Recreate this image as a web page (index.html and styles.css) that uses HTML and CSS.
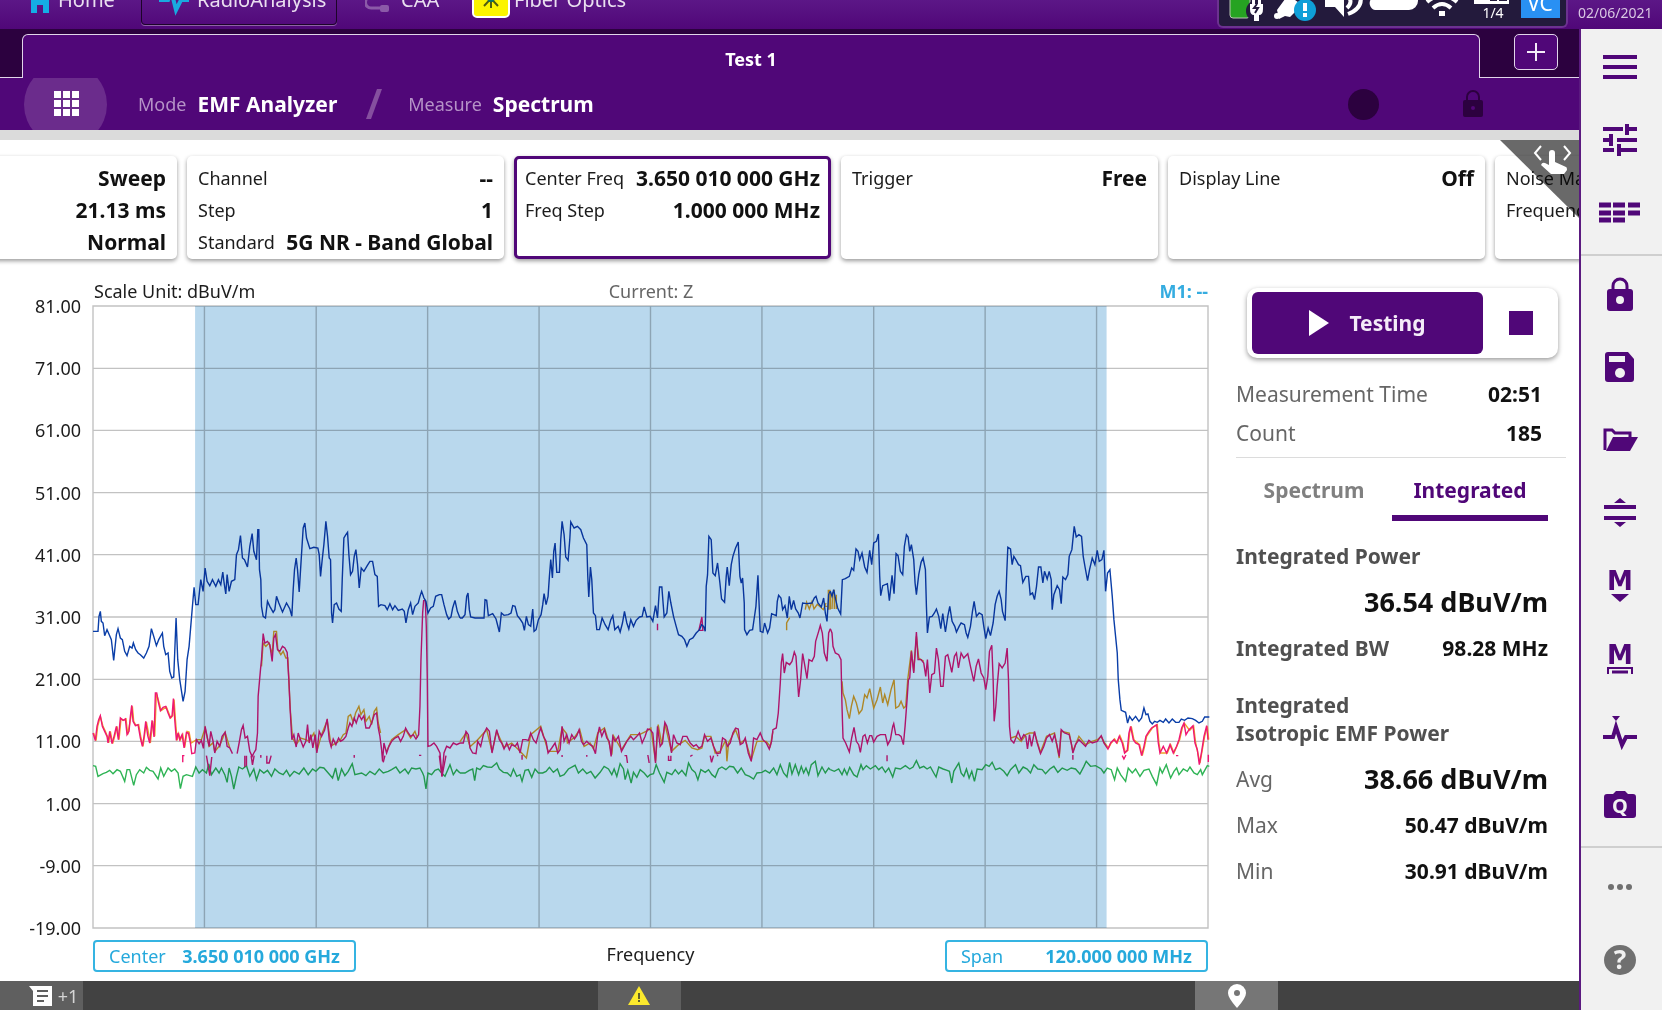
FILE: index.html
```html
<!DOCTYPE html>
<html lang="en">
<head>
  <meta charset="UTF-8" />
  <meta name="viewport" content="width=device-width, initial-scale=1.0"/>
  <title>EMF Analyzer</title>
  <link rel="stylesheet" href="styles.css">
</head>
<body>

  <!-- Top bar -->
  <header class="topbar">
    <nav class="apps">
      <a href="#" class="app app-home">
        <svg width="20" height="28" viewBox="0 0 20 28"><path d="M10 4 0 14h1v14h6v-8h6v8h6V14h1z" fill="#14aee5"/></svg>
        Home
      </a>
      <a href="#" class="app active">
        <svg width="30" height="34" viewBox="0 0 30 34"><path d="M0 18h9l3-10 5 20 5-10h8" fill="none" stroke="#19a9e0" stroke-width="4"/></svg>
        RadioAnalysis
      </a>
      <a href="#" class="app app-caa">
        <svg width="25" height="28" viewBox="0 0 25 28"><path d="M20 12H6a5 5 0 0 0 0 11h12" fill="none" stroke="#8b5aa8" stroke-width="3"/><rect x="15" y="20" width="9" height="7" rx="2" fill="#8b5aa8"/></svg>
        CAA
      </a>
      <a href="#" class="app app-fiber">
        <svg width="38" height="38" viewBox="0 0 38 38"><rect x="1" y="1" width="36" height="36" rx="4" fill="#fcf400" stroke="#fff" stroke-width="2"/><g stroke="#4f5d12" stroke-width="2"><path d="M19 8v20M9 18h20M12 11l14 15M26 11 12 26"/></g><circle cx="19" cy="18" r="4" fill="#08756c"/></svg>
        Fiber Optics
      </a>
    </nav>
    <div class="status">
      <svg width="347" height="26" viewBox="0 0 347 26">
        <!-- battery -->
        <rect x="11" y="-10" width="20" height="28" rx="3" fill="#26a322" stroke="#b9c4b2"/>
        <circle cx="38" cy="11" r="11" fill="#231a3c"/>
        <path d="M31 4h13v5q0 6-4 6h-5q-4 0-4-6zM33 0h3v5h-3zM39 0h3v5h-3zM35 14h5v7h-5z" fill="#fff"/>
        <path d="m38 4-3 4h4l-3 5" fill="none" stroke="#231a3c" stroke-width="2"/>
        <!-- satellite -->
        <path d="m58 10 11-15 14 10-12 12-5-1-6 3z" fill="#fff"/>
        <circle cx="58" cy="16" r="3" fill="#fff"/>
        <circle cx="86" cy="10" r="11" fill="#0f9fd8"/>
        <path d="M86 3v8M86 13v4" stroke="#fff" stroke-width="4"/>
        <!-- speaker -->
        <path d="M106-6h10l9-6v29l-9-10h-10z" fill="#fff"/>
        <path d="M128-4q7 5 0 12M129 14q16-6 12-20" fill="none" stroke="#fff" stroke-width="4"/>
        <!-- cloud -->
        <path d="M158-8h32a9 9 0 0 1 0 18h-34a7 7 0 0 1-3-12z" fill="#fff"/>
        <!-- wifi -->
        <path d="M208 2q15-13 30 0M214 8q9-8 18 0" fill="none" stroke="#fff" stroke-width="4"/>
        <rect x="220" y="11" width="6" height="5" fill="#fff"/>
        <!-- sim slots -->
        <path d="M255-6h35V4h-35z" fill="#fff"/>
        <path d="M271-6h7v7h-7zM280-6h8v7h-8z" fill="#231a3c"/>
        <text x="274" y="18" class="slot-text">1/4</text>
        <rect x="302" y="-20" width="39" height="38" fill="#2990f3"/>
        <text x="321" y="11" class="vnc-text">VC</text>
      </svg>
    </div>
    <time class="date">02/06/2021</time>
  </header>

  <div class="layout">
    <main class="main">

      <!-- Test tabs -->
      <div class="tabs">
        <div class="tabs-left"></div>
        <button class="tab" type="button">Test 1</button>
        <div class="tabs-right">
          <button class="add" type="button" aria-label="Add test">
            <svg width="20" height="20" viewBox="0 0 20 20"><path d="M10 1v18M1 10h18" stroke="#f4ebf8" stroke-width="2"/></svg>
          </button>
        </div>
      </div>

      <!-- Mode and measure -->
      <div class="modebar">
        <button class="launcher" type="button" aria-label="Modes">
          <svg width="26" height="26" viewBox="0 0 26 26" fill="#fff"><path d="M1 0h7v7H1zM10 0h7v7h-7zM19 0h7v7h-7zM1 9h7v7H1zM10 9h7v7h-7zM19 9h7v7h-7zM1 18h7v7H1zM10 18h7v7h-7zM19 18h7v7h-7z"/></svg>
        </button>
        <span class="mode-label">Mode</span>
        <span class="mode-value">EMF Analyzer</span>
        <svg class="slash" width="18" height="32" viewBox="0 0 18 32"><path d="M1 31 12 1h5L6 31z" fill="#854f9f"/></svg>
        <span class="mode-label">Measure</span>
        <span class="mode-value">Spectrum</span>
        <span class="record"></span>
        <svg class="mode-lock" width="22" height="28" viewBox="0 0 22 28"><path d="M5 11V7a6 6 0 0 1 12 0v4" fill="none" stroke="#2c013f" stroke-width="2"/><rect x="1" y="10" width="20" height="17" rx="2" fill="#2c013f"/><circle cx="11" cy="18" r="2" fill="#520778"/></svg>
      </div>

      <!-- Parameter cards -->
      <div class="cards">
        <div class="card">
          <div class="param"><span></span><b>Sweep</b></div>
          <div class="param"><span></span><b>21.13 ms</b></div>
          <div class="param"><span></span><b>Normal</b></div>
        </div>
        <div class="card">
          <div class="param"><span>Channel</span><b>--</b></div>
          <div class="param"><span>Step</span><b>1</b></div>
          <div class="param"><span>Standard</span><b>5G NR - Band Global</b></div>
        </div>
        <div class="card selected">
          <div class="param"><span>Center Freq</span><b>3.650 010 000 GHz</b></div>
          <div class="param"><span>Freq Step</span><b>1.000 000 MHz</b></div>
        </div>
        <div class="card">
          <div class="param"><span>Trigger</span><b>Free</b></div>
        </div>
        <div class="card">
          <div class="param"><span>Display Line</span><b>Off</b></div>
        </div>
        <div class="card">
          <div class="param"><span>Noise Marker</span><b>Off</b></div>
          <div class="param"><span>Frequency Count</span><b>Off</b></div>
        </div>
        <div class="corner"></div>
        <svg class="swipe" width="44" height="40" viewBox="0 0 44 40"><path d="m10 5-6 7 6 7M33 5l6 7-6 7" fill="none" stroke="#fff" stroke-width="2"/><path d="M18 12a3 3 0 0 1 6 0v9l11 5q1 0 1 3l-3 4H20l-10-9q1-3 4-2l4 2z" fill="#fff"/></svg>
      </div>

      <div class="workspace">

        <!-- Spectrum chart -->
        <section class="chart">
          <div class="chart-head">
            <span>Scale Unit: dBuV/m</span>
            <span class="current">Current: Z</span>
            <b class="marker">M1: --</b>
          </div>
          <div class="chart-body">
            <div class="axis">
              <span>81.00</span><span>71.00</span><span>61.00</span><span>51.00</span><span>41.00</span><span>31.00</span><span>21.00</span><span>11.00</span><span>1.00</span><span>-9.00</span><span>-19.00</span>
            </div>
            <svg class="plot" viewBox="0 0 3342 1866" preserveAspectRatio="none">
              <path class="grid" d="M0 0H3342V1866H0zM0 187H3342M0 373H3342M0 560H3342M0 746H3342M0 933H3342M0 1120H3342M0 1306H3342M0 1493H3342M0 1679H3342M334 0V1866M669 0V1866M1003 0V1866M1337 0V1866M1671 0V1866M2005 0V1866M2340 0V1866M2674 0V1866M3008 0V1866"/>

              <g transform="translate(-10 521)">
                <polyline class="orange" points="12,760 19,783 24,740 32,711 40,740 47,755 54,772 57,790 62,755 69,792 75,770 82,740 88,780 94,717 102,722 109,718 114,765 124,710 128,680 132,725 139,738 147,735 154,775 160,800 170,727 182,790 189,724 195,770 200,642 208,668 214,693 230,682 243,715 249,708 253,660 257,720 262,782 267,762 272,780 279,765 285,803 292,755 298,757 304,790 320,780 335,780 346,745 358,800 370,789 375,816 390,797 406,758 420,805"/>
                <polyline class="orange" points="515,560 520,490 528,500 538,490 547,525 552,455 560,455 564,510 573,525 580,515 588,535 594,535 601,685 608,775 619,795 632,775 648,780 658,785 672,760 681,815 695,765 712,723 724,798 740,790 752,780 760,765 768,760 775,710 782,705 790,728 797,700 807,680 813,705 822,690 828,725 838,710 845,735 853,695 860,685 865,730 872,760"/>
                <polyline class="orange" points="890,815 905,780 925,765 947,750 962,775 975,755 982,775"/>
                <polyline class="green" points="10,858 18,860 25,890 40,882 50,878 60,872 70,882 82,870 92,875 105,905 112,870 120,870 132,917 140,885 150,870 162,880 170,863 180,872 190,875 205,898 213,865 222,890 235,865 245,875 255,868 265,880 272,927 280,890 290,885 308,890 318,862 328,880 338,870 350,880 357,853 365,885 378,865 388,880 395,865 405,885 412,908 418,865 425,890 432,928 440,890 447,862 458,868 470,858 480,890 492,868 500,900 510,870 522,880 533,872 545,890 555,868 568,880 580,885 590,872 600,890 613,875 628,883 642,865 655,885 668,868 678,875 690,863 702,865 715,880 728,895 737,865 745,903 755,868 765,888 775,875 787,852 795,885 815,880 828,888 840,875 855,885 868,868 880,880 895,875 905,870 918,862 930,880 945,868 955,882 965,865 978,868 990,865 998,880 1002,890 1008,928 1014,880 1025,885 1035,872 1045,868 1055,880 1065,890 1080,855 1090,885 1100,870 1110,880"/>
                <polyline class="pink" points="10,760 17,783 22,740 27,720 32,708 38,740 45,755 52,770 55,790 60,755 67,792 73,770 80,740 86,780 92,715 100,722 107,718 112,765 118,755 122,710 126,677 130,725 137,738 145,735 152,775 158,800 163,770 168,725 174,768 180,790 187,722 193,772 197,640 201,640 206,668 212,693 220,683 228,680 235,700 241,715 247,708 251,657 255,720 260,782 265,760 270,780 277,765 283,805 290,758 296,760 302,790 306,822 315,820 320,780 328,792 335,782 341,806 346,740 352,770 358,800 363,755 370,785 375,820 382,785 390,800 397,770 406,758 412,800 420,805 428,822"/>
                <polyline class="pink" points="442,822 448,790 455,750 460,737 466,775 473,770 480,815 487,830 492,820 498,810 503,760 505,650 512,570 515,540 520,462 525,490 533,485 540,495 547,545 552,475 557,465 563,510 570,515 578,500 585,505 592,518 597,600 601,690 606,780 612,765 619,802 625,760 632,780 640,802 648,785 653,735 658,790 663,765 669,805 676,765 681,820 688,755 695,770 704,752 712,718 718,780 724,802 730,778 738,795 746,775 752,785 760,780 768,770 775,745 780,730 786,740 793,715 799,730 807,705 815,720 822,708 828,745 838,745 845,730 853,705 860,700 865,745 870,770 875,810 878,845 882,790 890,820 897,800 905,785 915,775 925,770 932,785 940,770 947,745 955,760 962,770 970,765 978,778 986,765 990,680 993,540 998,400 1001,363 1006,363 1009,440 1012,600 1014,800 1022,798 1032,790 1040,800 1050,820 1056,890 1062,820 1070,800 1080,805 1090,790 1100,795 1110,790"/>
                <path class="pink" d="M279 848v-20h5M350 828l10 60 6-56M465 828v34M470 828v30M484 828l4 28 5-28M513 826v8M531 828v22h7l6-22M793 826v8M880 848l5-20M987 827h7M1048 828l8 62 12-62"/>
                <polyline class="blue" points="10,455 25,455 28,410 32,395 35,425 40,430 45,468 52,450 60,468 65,480 72,542 80,465 85,447 92,475 98,480 105,515 112,528 120,500 127,505 131,490 138,510 145,520 152,525 162,535 170,520 178,500 185,447 192,470 200,498 207,480 218,460 222,500 228,525 235,520 240,575 246,595 252,592 259,415 264,540 270,600 280,665 286,635 292,540 298,500 303,440 308,380 313,323 318,375 325,375 333,300 340,335 346,265 352,305 360,318 368,300 378,320 386,300 393,315 399,277 403,310 408,343 412,285 418,335 425,305 435,300 440,225 446,210 452,168 458,235 464,240 473,262 480,200 487,162 492,215 500,240 504,150 507,150 509,270 513,300 515,380 520,410 527,415 533,365 540,380 550,398 555,390 560,350 567,370 578,397 590,370 600,388 606,410 610,330 614,270 619,235 623,270 628,337 634,240 640,145 645,130 650,175 660,207 672,203 684,205 688,225 692,290 697,240 702,195 708,125 713,170 718,235 722,240 725,400 728,430 733,375 740,370 747,388 754,395 757,300 762,175 768,165 773,158 777,225 782,285 788,275 793,230 798,210 803,255 808,325 814,265 822,275 832,258 840,245 848,245 855,285 862,290 866,380 873,375 885,378 892,390 900,372 908,390 915,378 925,392 937,388 943,395 948,430 955,390 962,370 968,405 975,380 985,370 990,350 995,335 1002,355 1008,365 1014,400 1022,385 1030,380 1037,350 1048,345 1055,345 1062,375 1070,405 1076,418 1083,412 1088,385 1095,362 1102,395 1110,415"/>
              </g>

              <g transform="translate(1100 521)">
                <polyline class="orange" points="0,786 18,760 30,801 53,780 80,750 96,816 110,755 132,803 155,790 180,815 199,835 212,765 242,740 264,815 293,815 306,745 318,760 322,790 343,773 359,750 372,800 390,790 400,808 413,760 433,745 447,790 455,825 460,768 484,810 512,765 538,765 562,753 572,745 586,845 594,735 605,795 614,733 634,815 655,795 675,782 695,805 712,810 725,805 733,770 752,770 765,820 780,815 797,780 800,845 805,790 826,750 840,790 855,780 873,840 890,785 918,785 930,800 938,755"/>
                <path class="orange" d="M979 452v-22l9-16M1035 390l4-22 8 20 8-22 6 22 10-14 18 16 8-20M1104 390v-58h5v58M1092 380h10"/>
                <polyline class="green" points="0,880 15,880 28,872 38,868 44,903 50,865 60,870 70,858 82,862 95,863 110,850 118,868 130,878 142,880 152,890 160,868 170,890 180,885 186,905 195,872 205,870 215,893 225,868 235,880 248,880 258,875 268,863 280,878 292,868 300,890 312,885 325,868 345,857 355,880 368,868 380,882 392,875 405,895 420,878 432,860 445,868 455,885 462,868 470,890 480,852 490,868 495,900 503,872 513,910 520,878 530,893 540,870 552,880 562,892 570,885 580,882 588,855 598,880 612,908 620,878 635,885 645,870 655,883 665,872 677,888 685,850 695,870 705,878 713,900 722,870 735,878 745,870 755,885 765,893 775,868 785,862 797,870 808,860 820,862 832,880 843,865 855,885 868,890 880,898 890,880 905,878 915,872 928,880 940,865 950,885 960,855 970,880 980,892 988,848 995,883 1005,855 1015,885 1023,860 1030,880 1037,865 1045,885 1053,855 1065,845 1073,888 1085,862 1095,880 1105,865 1110,870"/>
                <polyline class="pink" points="0,790 10,790 18,755 25,765 30,805 38,820 48,822 53,785 62,800 70,765 80,745 88,755 96,820 102,790 110,750 118,780 125,790 132,808 140,790 148,810 155,795 165,800 172,790 180,820 188,780 197,780 205,782 212,760 220,780 228,790 235,765 242,745 250,770 258,785 264,820 275,805 285,790 293,820 300,810 306,740 312,785 320,765 327,790 335,765 343,778 350,768 357,750 364,785 370,795 380,785 390,795 398,800 406,822 413,765 418,742 425,770 433,750 440,775 447,785 453,830 458,770 465,785 475,770 484,815 492,800 500,785 512,770 520,780 530,770 538,760 546,790 555,770 562,748 570,750 578,760 586,850 592,740 600,800 607,790 614,728 620,740 627,770 634,820 640,765 650,790 660,795 668,770 680,770 690,790 700,800 708,795 716,805 725,800 733,765 742,785 752,775 760,800 770,822 780,820 787,775 795,780 802,800 810,790 818,760 826,745 834,748 840,795 848,790 855,775 864,820 873,845 880,775 890,780 900,760 908,780 918,790 927,808 934,785 938,750 948,745 954,700 960,610 963,550 967,522 972,580 978,548 988,555 995,545 1002,517 1007,530 1015,652 1021,600 1027,522 1033,555 1040,597 1046,540 1055,545 1062,530 1066,485 1075,455 1080,437 1086,460 1092,520 1100,545 1105,460 1110,447"/>
                <path class="pink" d="M186 840v-14M306 826v6M380 826v5M493 828h6l3 22M563 826l4 24M625 828v14h7v-14M690 830l7-4M750 828l4 20 6-20M772 830v-5M592 452v-20M716 452l9-40 3 40z"/>
                <polyline class="blue" points="0,415 7,415 15,405 20,350 24,340 28,390 32,412 45,415 60,415 72,415 75,360 80,362 85,408 98,402 108,418 118,457 124,400 132,407 145,405 153,400 158,378 165,380 172,408 180,418 188,430 193,452 199,410 205,435 212,440 218,388 222,455 228,450 235,420 243,405 248,375 252,342 258,375 264,350 268,290 272,240 277,295 281,215 285,190 290,278 298,278 302,180 306,125 312,165 317,232 324,242 329,180 332,127 342,145 352,140 362,150 370,175 380,195 383,290 386,352 391,262 395,300 400,400 406,408 410,450 418,450 426,415 435,435 444,450 452,420 458,408 464,450 474,440 480,457 487,430 493,395 500,430 506,448 512,420 520,440 528,422 538,412 546,410 552,382 560,412 570,410 578,425 586,378 592,415 598,322 605,322 612,412 620,400 626,335 632,370 640,410 648,440 655,465 665,470 673,480 680,500 688,480 698,475 708,460 718,450 724,435 730,440 735,455 738,320 742,285 746,170 753,180 758,280 765,288 772,250 779,310 784,358 793,368 798,290 801,262 807,318 813,255 818,230 826,205 834,187 839,290 843,310 847,295 852,370 853,450 860,465 868,452 877,450 882,415 887,380 893,287 898,410 900,455 908,458 913,430 922,460 928,445 934,402 948,408 951,365 955,347 962,355 967,390 974,378 981,415 987,350 993,390 1000,362 1006,388 1014,400 1019,415 1027,370 1040,372 1055,370 1062,355 1067,350 1073,370 1083,382 1090,355 1095,400 1100,425 1105,345 1110,335"/>
              </g>

              <g transform="translate(2210 521)">
                <path class="orange" d="M0 388V340M5 388l2-50M12 330v58M18 388V345"/>
                <polyline class="orange" points="35,605 38,640 45,660 50,690 57,717 63,680 70,650 78,670 86,702 95,690 103,645 110,655 118,627 130,685 140,660 150,622 157,670 163,645 172,675 182,630 191,600 196,685 205,680 212,665 220,685 226,680 232,600 243,512 250,575 258,470 265,535 280,545"/>
                <polyline class="orange" points="541,775 556,770 572,785 586,765 597,760 612,760 630,818 648,770 672,760 686,835 692,755 716,760 727,815 745,770 765,795 785,785 800,780 812,770 822,790 834,805 842,790 852,778 860,790 868,768 877,790 884,818 892,812 897,760 902,740 910,780 927,795 935,828 942,800 948,770 965,745 980,735 985,790 990,820 1010,820 1020,795 1030,820 1047,780 1055,745 1062,732 1077,752 1089,740 1095,790 1108,850 1122,770 1130,740 1134,780"/>
                <polyline class="green" points="0,870 12,875 25,868 35,885 42,868 50,885 58,863 70,885 80,892 92,855 98,870 108,858 120,868 135,858 145,870 155,862 165,878 175,865 187,892 195,865 210,868 225,858 238,868 248,862 258,843 268,865 280,860 290,868 300,862 310,880 317,892 325,862 338,868 350,872 357,875 364,910 370,875 385,850 392,880 400,890 408,868 416,895 424,875 432,905 440,868 455,870 466,855 476,860 485,848 495,870 508,865 520,875 530,888 540,870 555,855 565,880 578,862 590,868 600,880 610,855 622,868 635,870 645,882 658,868 670,860 682,878 695,865 710,872 722,865 735,868 748,883 760,860 767,845 780,860 795,858 812,868 820,880 830,865 842,870 852,900 860,865 870,885 885,905 893,865 905,880 915,868 928,890 940,872 955,868 965,890 978,915 988,865 995,880 1007,855 1020,895 1030,875 1038,865 1045,885 1058,868 1070,875 1078,862 1090,880 1100,885 1110,870 1115,885 1130,858 1136,860"/>
                <polyline class="pink" points="0,447 5,460 8,500 15,520 25,525 32,540 35,680 38,775 46,790 57,817 64,775 71,743 78,785 85,795 90,818 98,770 104,765 111,790 118,768 124,768 130,787 140,770 150,765 165,765 172,795 180,780 187,740 190,732 196,765 205,765 212,770 219,795 224,740 230,660 234,600 238,595 243,515 250,580 258,457 263,540 272,540 280,550 286,590 291,540 298,640 304,585 312,580 318,505 324,540 331,620 338,620 345,530 352,525 358,550 364,578 372,530 378,520 384,565 392,520 400,535 412,522 420,560 430,605 437,560 444,538 452,580 460,595 466,630 472,590 477,515 484,497 488,600 491,725 496,680 500,620 506,552 515,565 524,550 530,505 534,600 537,740 541,780 550,790 556,775 563,755 572,780 580,765 586,770 591,808 597,765 603,800 612,755 620,790 630,822 640,800 648,775 657,765 665,785 672,765 680,800 686,830 692,750 702,760 716,765 722,790 727,820 735,795 745,780 755,790 765,800 775,782 785,790 800,785 812,768 820,790 832,808 840,790 850,780 858,790 866,770 875,790 882,820 890,812 895,760 900,740 908,780 915,790 925,795 933,828 940,800 946,770 955,755 963,745 978,735 983,790 988,820 998,800 1008,820 1018,795 1028,820 1038,800 1045,780 1053,745 1060,730 1066,765 1075,750 1087,738 1093,790 1100,810 1106,855 1113,815 1120,770 1128,738 1132,780"/>
                <path class="pink" d="M170 845v-18M727 840v-14M875 828l5 10 6-12M1036 828h7M1133 825v22"/>
                <polyline class="blue" points="0,335 5,350 10,330 16,360 22,385 31,403 36,300 45,297 57,290 64,265 70,272 77,208 83,215 88,240 95,220 103,262 110,278 118,212 124,255 130,190 138,185 144,163 148,290 151,348 157,318 171,312 177,363 185,287 191,342 197,222 203,228 210,275 217,285 222,200 228,165 233,172 238,215 243,195 250,240 254,310 258,345 265,285 272,248 278,235 285,270 288,380 291,460 297,412 305,410 312,400 318,388 325,410 331,447 337,402 345,457 352,410 358,380 365,425 373,440 378,457 386,440 392,430 402,435 407,460 412,473 420,440 426,395 431,365 438,410 446,400 455,405 460,440 466,477 473,445 480,468 488,430 494,375 500,350 506,335 512,360 516,395 524,423 528,300 532,203 540,208 545,255 550,230 556,240 564,255 570,258 577,308 586,290 594,290 599,345 606,340 612,360 618,320 624,262 631,262 637,310 642,275 650,298 656,275 662,300 665,390 670,345 680,318 687,330 692,372 697,292 705,300 712,285 716,230 724,210 731,140 737,172 745,165 753,170 758,230 764,265 771,303 777,270 785,235 793,255 800,212 806,245 814,240 820,212 825,335 831,280 838,270 845,350 850,420 855,470 860,520 863,600 868,660 872,692 885,698 891,730 897,710 905,722 915,710 925,725 933,715 940,685 946,705 952,703 958,725 965,733 972,725 980,728 988,722 998,728 1005,718 1015,730 1025,718 1035,728 1045,728 1052,718 1062,722 1072,715 1085,717 1095,722 1105,730 1115,725 1122,712 1136,712"/>
              </g>

              <!-- integration band -->
              <rect class="band" x="306" y="0" width="2732" height="1866"/>
            </svg>
          </div>
          <div class="chart-foot">
            <button class="freq" type="button"><span>Center</span><b>3.650 010 000 GHz</b></button>
            <span class="axis-name">Frequency</span>
            <button class="freq" type="button"><span>Span</span><b>120.000 000 MHz</b></button>
          </div>
        </section>

        <!-- Results -->
        <aside class="panel">
          <div class="runner">
            <button class="run" type="button">
              <svg width="20" height="26" viewBox="0 0 20 26"><path d="M0 0l20 13L0 26z" fill="#fff"/></svg>
              Testing
            </button>
            <button class="stop" type="button" aria-label="Stop"></button>
          </div>
          <div class="info">
            <div class="row"><span>Measurement Time</span><b>02:51</b></div>
            <div class="row"><span>Count</span><b>185</b></div>
          </div>
          <div class="views">
            <button type="button">Spectrum</button>
            <button type="button" class="active">Integrated</button>
          </div>
          <div class="results">
            <h3>Integrated Power</h3>
            <div class="row big"><span></span><b>36.54 dBuV/m</b></div>
            <div class="row"><h3>Integrated BW</h3><b>98.28 MHz</b></div>
            <h3 class="isotropic">Integrated<br>Isotropic EMF Power</h3>
            <div class="row big"><span>Avg</span><b>38.66 dBuV/m</b></div>
            <div class="row"><span>Max</span><b>50.47 dBuV/m</b></div>
            <div class="row"><span>Min</span><b>30.91 dBuV/m</b></div>
          </div>
        </aside>
      </div>

      <!-- Status bar -->
      <footer class="bottombar">
        <button class="cell messages" type="button">
          <svg width="24" height="20" viewBox="0 0 24 20"><path d="M0 0h23v20H4V5z" fill="#fff"/><path d="M8 5h11M8 10h11M8 15h7" stroke="#5f5f5f" stroke-width="2"/></svg>
          +1
        </button>
        <button class="cell warning" type="button" aria-label="Warnings">
          <svg width="22" height="19" viewBox="0 0 22 19"><path d="M11 0l11 19H0z" fill="#fbe92d"/><path d="M11 7v6M11 14v2" stroke="#5f5f2a" stroke-width="2"/></svg>
        </button>
        <button class="cell gps" type="button" aria-label="Location">
          <svg width="18" height="24" viewBox="0 0 18 24"><path d="M9 24Q0 14 0 9a9 9 0 0 1 18 0q0 5-9 15z" fill="#fff"/><circle cx="9" cy="9" r="3" fill="#767676"/></svg>
        </button>
      </footer>
    </main>

    <!-- Right toolbar -->
    <nav class="toolbar">
      <div class="group">
        <button type="button" aria-label="Menu"><svg width="36" height="36" viewBox="0 0 36 36"><path d="M1 8h34M1 18h34M1 28h34" stroke="#500778" stroke-width="4"/></svg></button>
        <button type="button" aria-label="Setup"><svg width="36" height="36" viewBox="0 0 36 36"><path d="M1 7h20M27 7h8M25 2v11M1 18h8M9 12v12M15 18h20M1 28h11M17 22v12M17 28h18" stroke="#500778" stroke-width="4"/></svg></button>
        <button type="button" aria-label="Keypad"><svg width="42" height="22" viewBox="0 0 42 22"><path d="M0 3h12M14 3h12M29 3h12M0 11h12M14 11h12M29 11h12M0 18h12M14 18h12" stroke="#500778" stroke-width="5"/></svg></button>
      </div>
      <div class="group">
        <button type="button" aria-label="Lock"><svg width="28" height="34" viewBox="0 0 28 34"><path d="M7 12V9a7 7 0 0 1 14 0v4" fill="none" stroke="#500778" stroke-width="3"/><rect x="1" y="12" width="26" height="22" rx="3" fill="#500778"/><circle cx="14" cy="23" r="4" fill="#f1f1f1"/></svg></button>
        <button type="button" aria-label="Save"><svg width="30" height="30" viewBox="0 0 30 30"><path d="M3 0h20l6 7v20q0 3-3 3H3q-3 0-3-3V3q0-3 3-3z" fill="#500778"/><path d="M4 4h16v6H4z" fill="#f1f1f1"/><circle cx="15" cy="21" r="5" fill="#f1f1f1"/></svg></button>
        <button type="button" aria-label="Open"><svg width="36" height="24" viewBox="0 0 36 24"><path d="M3 22V2h7l3 3h15v5" fill="none" stroke="#500778" stroke-width="3"/><path d="M11 9h25l-8 14H4z" fill="#500778"/></svg></button>
        <button type="button" aria-label="Limits"><svg width="32" height="30" viewBox="0 0 32 30"><path d="M0 9h32M0 20h32" stroke="#500778" stroke-width="4"/><path d="M10 5l6-5 6 5zM10 24l6 5 6-5z" fill="#500778"/></svg></button>
        <button type="button" aria-label="Marker"><svg width="32" height="34" viewBox="0 0 32 34"><text x="16" y="21" class="m-icon">M</text><path d="M7 25h18l-9 8z" fill="#500778"/></svg></button>
        <button type="button" aria-label="Marker table"><svg width="32" height="34" viewBox="0 0 32 34"><text x="16" y="22" class="m-icon">M</text><path d="M4 32v-6h24v6" fill="none" stroke="#500778" stroke-width="2"/><path d="M8 30h16" stroke="#500778" stroke-width="3"/></svg></button>
        <button type="button" aria-label="Peak search"><svg width="34" height="36" viewBox="0 0 34 36"><path d="M0 23h10l3-10 6 18 4-8h11" fill="none" stroke="#500778" stroke-width="4"/><path d="M9 2h8l-4 5z" fill="#500778"/></svg></button>
        <button type="button" aria-label="Quick capture"><svg width="32" height="28" viewBox="0 0 32 28"><path d="M3 3h6l3-3h9l3 3h5q3 0 3 3v18q0 3-3 3H3q-3 0-3-3V6q0-3 3-3z" fill="#500778"/><text x="16" y="22" class="q-icon">Q</text></svg></button>
      </div>
      <div class="group">
        <button type="button" aria-label="More"><svg width="26" height="8" viewBox="0 0 26 8" fill="#707070"><circle cx="4" cy="4" r="3"/><circle cx="13" cy="4" r="3"/><circle cx="22" cy="4" r="3"/></svg></button>
        <button type="button" aria-label="Help"><svg width="32" height="30" viewBox="0 0 32 30"><ellipse cx="16" cy="15" rx="16" ry="15" fill="#707070"/><text x="16" y="24" class="help-icon">?</text></svg></button>
      </div>
    </nav>
  </div>

</body>
</html>
```
FILE: styles.css
```css
* {
  box-sizing: border-box;
}

body {
  font-family: "Noto Sans", sans-serif;
  font-size: 18px;
  background: white;
  color: #1c1c1c;
  margin: 0;
  height: 100vh;
  display: flex;
  flex-direction: column;
  overflow: hidden;
}

button {
  font: inherit;
  color: inherit;
  background: none;
  border: 0;
  padding: 0;
  cursor: pointer;
}

svg {
  display: block;
  flex: none;
}

h3 {
  font-size: 21px;
  margin: 0;
  color: #505050;
}

/* Top bar */
.topbar {
  display: flex;
  align-items: flex-end;
  height: 29px;
  overflow: hidden;
  background: linear-gradient(#5c1787, #500778);
  color: white;
  flex: none;
}

.apps {
  display: flex;
  flex: 1;
  height: 52px;
  margin-bottom: 4px;
  font-size: 20px;
}

.app {
  display: flex;
  align-items: center;
  color: #eadff0;
  text-decoration: none;
}

.app.active {
  border: 1px solid #1c0429;
  border-radius: 4px;
  width: 196px;
  padding-left: 17px;
  gap: 8px;
  box-shadow: 0 1px #8d62a5;
}

.app-home {
  width: 141px;
  padding-left: 30px;
  gap: 8px;
}

.app-caa {
  padding-left: 28px;
  gap: 11px;
  width: 135px;
}

.app-fiber {
  gap: 4px;
}

.status {
  border: 2px solid #6c3290;
  border-top: 0;
  border-radius: 0 0 6px 6px;
  background: #231a3c;
  margin-bottom: 1px;
}

.slot-text {
  font-size: 14px;
  fill: white;
  text-anchor: middle;
}

.vnc-text {
  font-size: 21px;
  fill: white;
  text-anchor: middle;
}

.date {
  font-size: 14px;
  line-height: 18px;
  width: 94px;
  padding-left: 10px;
  margin-bottom: 7px;
  color: #d9c8e3;
}

.layout {
  display: flex;
  flex: 1;
  min-height: 0;
}

.main {
  flex: 1;
  min-width: 0;
  display: flex;
  flex-direction: column;
}

/* Test tabs */
.tabs {
  display: flex;
  height: 49px;
  background: #2c013f;
}

.tabs-left {
  width: 22px;
  border-bottom: 1px solid #e2d5ea;
}

.tab {
  flex: 1;
  margin-top: 5px;
  padding-top: 5px;
  border: 1px solid #e2d5ea;
  border-bottom: 0;
  border-radius: 6px 6px 0 0;
  background: #500778;
  color: white;
  font-weight: bold;
}

.tabs-right {
  width: 99px;
  padding: 5px 0 0 34px;
  border-bottom: 1px solid #e2d5ea;
}

.add {
  display: flex;
  align-items: center;
  justify-content: center;
  width: 44px;
  height: 36px;
  border: 1px solid #e2d5ea;
  border-radius: 5px;
  background: #500778;
}

/* Mode and measure */
.modebar {
  display: flex;
  align-items: center;
  height: 62px;
  padding-left: 24px;
  background: #500778;
  border-bottom: 10px solid #dbdbdb;
  overflow: hidden;
}

.launcher {
  display: flex;
  align-items: center;
  justify-content: center;
  width: 83px;
  height: 83px;
  margin-right: 31px;
  border-radius: 50%;
  background: #6b2c8c;
  flex: none;
}

.mode-label {
  color: #b592c7;
}

.mode-value {
  color: white;
  font-size: 21px;
  font-weight: bold;
  margin-left: 11px;
}

.slash {
  margin: 0 25px 0 28px;
}

.record {
  width: 31px;
  height: 31px;
  border-radius: 50%;
  background: #2c013f;
  margin-left: auto;
}

.mode-lock {
  margin: 0 95px 0 83px;
}

/* Parameter cards */
.cards {
  display: flex;
  gap: 10px;
  position: relative;
  overflow: hidden;
  padding: 16px 0 13px;
}

.card {
  flex: 0 0 317px;
  height: 103px;
  padding: 6px 11px;
  border-radius: 5px;
  background: white;
  box-shadow: 0 2px 4px rgba(0, 0, 0, 0.4);
}

.card:first-child {
  margin-left: -140px;
}

.card.selected {
  border: 3px solid #500778;
  padding: 3px 8px;
}

.param {
  display: flex;
  justify-content: space-between;
  align-items: center;
  height: 32px;
  white-space: nowrap;
}

.param b {
  font-size: 21px;
  color: #111;
}

.corner {
  position: absolute;
  top: 0;
  right: 0;
  width: 79px;
  height: 78px;
  background: #696969;
  clip-path: polygon(0 0, 100% 0, 100% 100%);
  mix-blend-mode: multiply;
}

.swipe {
  position: absolute;
  top: 1px;
  right: 4px;
}

.workspace {
  display: flex;
  flex: 1;
  min-height: 0;
}

/* Spectrum chart */
.chart {
  flex: 1;
  min-width: 0;
  display: flex;
  flex-direction: column;
  padding: 4px 0 9px;
}

.chart-head {
  display: grid;
  grid-template-columns: 1fr auto 1fr;
  margin-left: 94px;
  line-height: 30px;
}

.current {
  color: #666;
}

.marker {
  color: #35ace0;
  text-align: right;
}

.chart-body {
  display: flex;
  flex: 1;
  min-height: 0;
  gap: 12px;
}

.axis {
  display: flex;
  flex-direction: column;
  justify-content: space-between;
  width: 81px;
  margin: -12px 0;
  text-align: right;
  line-height: 24px;
}

.plot {
  flex: 1;
  min-width: 0;
  height: 100%;
  overflow: visible;
}

.plot polyline,
.plot path {
  fill: none;
  stroke-width: 1.4;
  vector-effect: non-scaling-stroke;
}

.plot .grid {
  stroke: #c2c2c2;
}

.plot .blue {
  stroke: #0a3ea8;
}

.plot .pink {
  stroke: #f01773;
}

.plot .orange {
  stroke: #f0a02a;
}

.plot .green {
  stroke: #2fb455;
}

.band {
  fill: #b9d8ed;
  mix-blend-mode: multiply;
}

.chart-foot {
  display: flex;
  justify-content: space-between;
  align-items: center;
  margin: 12px 0 0 93px;
}

.freq {
  display: flex;
  justify-content: space-between;
  align-items: center;
  width: 263px;
  height: 32px;
  padding: 0 14px;
  border: 2px solid #35b4e2;
  border-radius: 4px;
  color: #25a9dc;
}

.axis-name {
  line-height: 26px;
  margin-bottom: 5px;
}

/* Results */
.panel {
  width: 330px;
  margin: 16px 13px 0 28px;
  font-size: 21px;
}

.runner {
  display: flex;
  margin: 0 8px 0 11px;
  padding: 4px 5px;
  border-radius: 10px;
  box-shadow: 0 2px 5px rgba(0, 0, 0, 0.4);
}

.run {
  display: flex;
  align-items: center;
  justify-content: center;
  gap: 20px;
  flex: 1;
  height: 62px;
  border-radius: 6px;
  background: #500778;
  color: #f4ebf8;
  font-weight: bold;
}

.stop {
  width: 24px;
  height: 24px;
  margin: 19px 20px 0 26px;
  background: #500778;
}

.row {
  display: flex;
  justify-content: space-between;
  align-items: center;
  line-height: 28px;
  color: #666;
}

.row b {
  color: #111;
}

.info {
  display: grid;
  gap: 11px;
  padding: 22px 24px 10px 0;
  border-bottom: 1px solid #dcdcdc;
}

.views {
  display: flex;
  padding-right: 18px;
}

.views button {
  flex: 1;
  height: 63px;
  padding-top: 6px;
  border-bottom: 6px solid transparent;
  color: #808080;
  font-weight: bold;
}

.views .active {
  color: #500778;
  border-color: #500778;
}

.results {
  display: grid;
  gap: 18px;
  padding: 21px 18px 0 0;
}

.results h3 {
  line-height: 28px;
}

.results .isotropic {
  margin-top: 11px;
}

.row.big b {
  font-size: 27px;
}

/* Status bar */
.bottombar {
  display: flex;
  justify-content: space-between;
  height: 29px;
  padding-right: 301px;
  background: #424242;
}

.cell {
  display: flex;
  align-items: center;
  justify-content: center;
  gap: 5px;
  width: 83px;
  background: #5f5f5f;
  color: #d5d5d5;
}

.messages {
  padding-left: 24px;
}

.gps {
  background: #767676;
}

/* Right toolbar */
.toolbar {
  width: 83px;
  padding-right: 3px;
  background: #f1f1f1;
  border-left: 2px solid #5b1a80;
}

.group {
  margin-right: -3px;
  padding: 1px 3px 5px 0;
  border-bottom: 2px solid #cfcfcf;
}

.group:last-child {
  border-bottom: 0;
  padding-top: 2px;
}

.group button {
  display: flex;
  align-items: center;
  justify-content: center;
  width: 100%;
  height: 73px;
}

.m-icon {
  font: bold 26px "DejaVu Sans", sans-serif;
  fill: #500778;
  text-anchor: middle;
}

.q-icon {
  font-size: 20px;
  font-weight: bold;
  fill: #f1f1f1;
  text-anchor: middle;
}

.help-icon {
  font-size: 26px;
  font-weight: bold;
  fill: #f1f1f1;
  text-anchor: middle;
}
```
